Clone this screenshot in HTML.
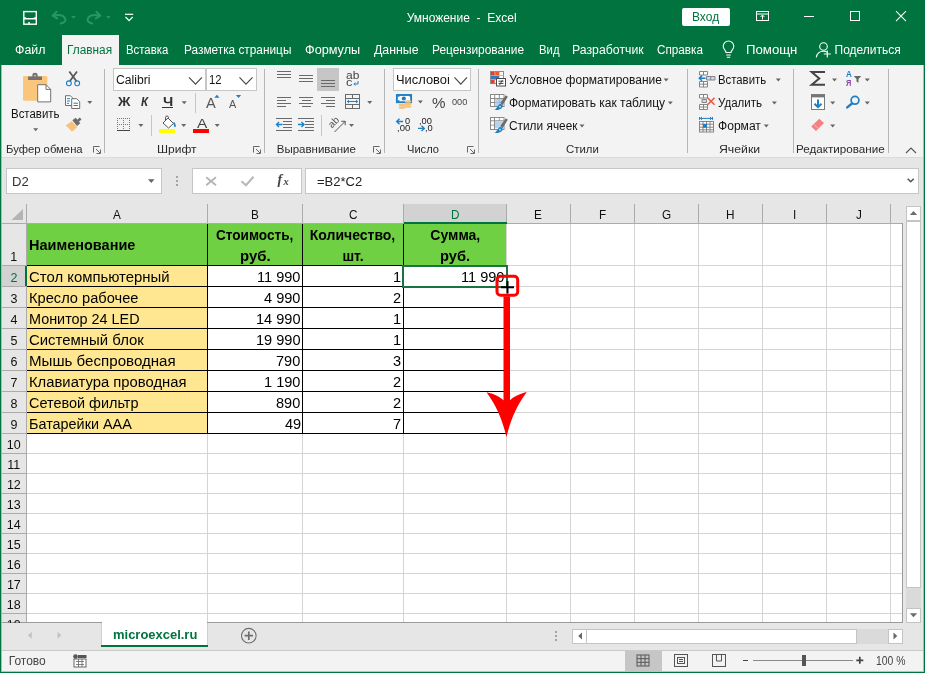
<!DOCTYPE html>
<html lang="ru"><head><meta charset="utf-8"><title>Умножение - Excel</title>
<style>
html,body{margin:0;padding:0}
body{width:925px;height:673px;overflow:hidden;background:#00733e;font-family:"Liberation Sans",sans-serif;}
#w{position:relative;width:925px;height:673px;overflow:hidden;will-change:transform}
#w>div,#w>span{position:absolute;display:block}
.t{white-space:pre;transform-origin:0 0}
#ic{position:absolute;left:0;top:0;pointer-events:none}
</style></head>
<body>
<div id="w">
<div style="left:0px;top:0px;width:925px;height:65px;background:#00733e;"></div>
<span class="t" style="left:406.68px;top:11.84px;font-size:12px;line-height:12px;color:#fff;">Умножение  -  Excel</span>
<div style="left:682px;top:8px;width:48px;height:18px;background:#fff;border-radius:2px;"></div>
<span class="t" style="left:692.01px;top:11.14px;font-size:12px;line-height:12px;color:#00733e;">Вход</span>
<div style="left:62px;top:35px;width:57px;height:30px;background:#f3f3f3;"></div>
<span class="t" style="left:14.99px;top:44.14px;font-size:12px;line-height:12px;color:#fff;transform:scaleX(1.0330);">Файл</span>
<span class="t" style="left:67.03px;top:44.14px;font-size:12px;line-height:12px;color:#00733e;transform:scaleX(0.9873);">Главная</span>
<span class="t" style="left:126.37px;top:44.14px;font-size:12px;line-height:12px;color:#fff;transform:scaleX(0.9469);">Вставка</span>
<span class="t" style="left:183.63px;top:44.14px;font-size:12px;line-height:12px;color:#fff;transform:scaleX(0.9865);">Разметка страницы</span>
<span class="t" style="left:305.37px;top:44.14px;font-size:12px;line-height:12px;color:#fff;transform:scaleX(1.0573);">Формулы</span>
<span class="t" style="left:374.41px;top:44.14px;font-size:12px;line-height:12px;color:#fff;transform:scaleX(1.0274);">Данные</span>
<span class="t" style="left:432.42px;top:44.14px;font-size:12px;line-height:12px;color:#fff;transform:scaleX(0.9930);">Рецензирование</span>
<span class="t" style="left:538.77px;top:44.14px;font-size:12px;line-height:12px;color:#fff;transform:scaleX(0.9455);">Вид</span>
<span class="t" style="left:571.99px;top:44.14px;font-size:12px;line-height:12px;color:#fff;transform:scaleX(1.0239);">Разработчик</span>
<span class="t" style="left:656.90px;top:44.14px;font-size:12px;line-height:12px;color:#fff;transform:scaleX(0.9771);">Справка</span>
<span class="t" style="left:746.33px;top:44.14px;font-size:12px;line-height:12px;color:#fff;transform:scaleX(1.0998);">Помощн</span>
<span class="t" style="left:834.52px;top:44.14px;font-size:12px;line-height:12px;color:#fff;">Поделиться</span>
<div style="left:1px;top:65px;width:922px;height:92px;background:#f3f3f3;"></div>
<div style="left:104px;top:69px;width:1px;height:84px;background:#b6b6b6;"></div>
<div style="left:264px;top:69px;width:1px;height:84px;background:#b6b6b6;"></div>
<div style="left:384px;top:69px;width:1px;height:84px;background:#b6b6b6;"></div>
<div style="left:478px;top:69px;width:1px;height:84px;background:#b6b6b6;"></div>
<div style="left:687px;top:69px;width:1px;height:84px;background:#b6b6b6;"></div>
<div style="left:793px;top:69px;width:1px;height:84px;background:#b6b6b6;"></div>
<div style="left:888px;top:69px;width:1px;height:84px;background:#b6b6b6;"></div>
<span class="t" style="left:5.57px;top:144.27px;font-size:11.5px;line-height:11.5px;color:#2b2b2b;transform:scaleX(0.9806);">Буфер обмена</span>
<span class="t" style="left:156.61px;top:144.27px;font-size:11.5px;line-height:11.5px;color:#2b2b2b;transform:scaleX(1.0465);">Шрифт</span>
<span class="t" style="left:276.75px;top:144.27px;font-size:11.5px;line-height:11.5px;color:#2b2b2b;">Выравнивание</span>
<span class="t" style="left:406.83px;top:144.27px;font-size:11.5px;line-height:11.5px;color:#2b2b2b;transform:scaleX(0.9655);">Число</span>
<span class="t" style="left:566.22px;top:144.27px;font-size:11.5px;line-height:11.5px;color:#2b2b2b;transform:scaleX(0.9890);">Стили</span>
<span class="t" style="left:719.43px;top:144.27px;font-size:11.5px;line-height:11.5px;color:#2b2b2b;transform:scaleX(1.0662);">Ячейки</span>
<span class="t" style="left:796.15px;top:144.27px;font-size:11.5px;line-height:11.5px;color:#2b2b2b;transform:scaleX(1.0123);">Редактирование</span>
<span class="t" style="left:10.66px;top:107.54px;font-size:12px;line-height:12px;color:#141414;transform:scaleX(0.9537);">Вставить</span>
<div style="left:113px;top:68px;width:93px;height:23px;background:#fff;border:1px solid #c6c6c6;box-sizing:border-box;"></div>
<div style="left:206px;top:68px;width:51px;height:23px;background:#fff;border:1px solid #c6c6c6;box-sizing:border-box;"></div>
<span class="t" style="left:115.98px;top:73.64px;font-size:12px;line-height:12px;color:#141414;transform:scaleX(1.0126);">Calibri</span>
<span class="t" style="left:209.04px;top:73.64px;font-size:12px;line-height:12px;color:#141414;transform:scaleX(0.9384);">12</span>
<span class="t" style="left:117.54px;top:95.92px;font-size:12.5px;line-height:12.5px;color:#333;font-weight:bold;transform:scaleX(1.0970);">Ж</span>
<span class="t" style="left:141.00px;top:95.92px;font-size:12.5px;line-height:12.5px;color:#333;font-weight:bold;font-style:italic;transform:scaleX(0.9171);">К</span>
<span class="t" style="left:163.11px;top:95.92px;font-size:12.5px;line-height:12.5px;color:#333;font-weight:bold;transform:scaleX(1.1693);">Ч</span>
<div style="left:162px;top:107px;width:11px;height:1px;background:#333;"></div>
<div style="left:195px;top:93px;width:1px;height:20px;background:#c6c6c6;"></div>
<span class="t" style="left:206.27px;top:96.15px;font-size:14px;line-height:14px;color:#555;transform:scaleX(1.0448);">A</span>
<span class="t" style="left:229.28px;top:99.11px;font-size:10.5px;line-height:10.5px;color:#555;transform:scaleX(1.0341);">A</span>
<div style="left:151px;top:115px;width:1px;height:21px;background:#c6c6c6;"></div>
<div style="left:159px;top:129px;width:16px;height:4px;background:#ffff00;"></div>
<span class="t" style="left:196.97px;top:117.47px;font-size:13.5px;line-height:13.5px;color:#444;transform:scaleX(1.1394);">A</span>
<div style="left:193px;top:129px;width:16px;height:4px;background:#ff0000;"></div>
<div style="left:277px;top:71px;width:14px;height:1px;background:#6a6a6a;"></div>
<div style="left:277px;top:74px;width:14px;height:1px;background:#6a6a6a;"></div>
<div style="left:277px;top:77px;width:14px;height:1px;background:#6a6a6a;"></div>
<div style="left:299px;top:75px;width:14px;height:1px;background:#6a6a6a;"></div>
<div style="left:299px;top:78px;width:14px;height:1px;background:#6a6a6a;"></div>
<div style="left:299px;top:81px;width:14px;height:1px;background:#6a6a6a;"></div>
<div style="left:317px;top:68px;width:22px;height:23px;background:#c6c6c6;"></div>
<div style="left:321px;top:80px;width:14px;height:1px;background:#6a6a6a;"></div>
<div style="left:321px;top:83px;width:14px;height:1px;background:#6a6a6a;"></div>
<div style="left:321px;top:86px;width:14px;height:1px;background:#6a6a6a;"></div>
<span class="t" style="left:346.19px;top:70.11px;font-size:10.5px;line-height:10.5px;color:#444;transform:scaleX(1.1398);">ab</span>
<span class="t" style="left:346.46px;top:77.11px;font-size:10.5px;line-height:10.5px;color:#444;transform:scaleX(1.2149);">c</span>
<div style="left:277px;top:97px;width:14px;height:1px;background:#6a6a6a;"></div>
<div style="left:277px;top:100px;width:9px;height:1px;background:#6a6a6a;"></div>
<div style="left:277px;top:103px;width:14px;height:1px;background:#6a6a6a;"></div>
<div style="left:277px;top:106px;width:9px;height:1px;background:#6a6a6a;"></div>
<div style="left:299.0px;top:97px;width:14px;height:1px;background:#6a6a6a;"></div>
<div style="left:301.5px;top:100px;width:9px;height:1px;background:#6a6a6a;"></div>
<div style="left:299.0px;top:103px;width:14px;height:1px;background:#6a6a6a;"></div>
<div style="left:301.5px;top:106px;width:9px;height:1px;background:#6a6a6a;"></div>
<div style="left:321px;top:97px;width:14px;height:1px;background:#6a6a6a;"></div>
<div style="left:326px;top:100px;width:9px;height:1px;background:#6a6a6a;"></div>
<div style="left:321px;top:103px;width:14px;height:1px;background:#6a6a6a;"></div>
<div style="left:326px;top:106px;width:9px;height:1px;background:#6a6a6a;"></div>
<div style="left:276px;top:118px;width:16px;height:1px;background:#6a6a6a;"></div>
<div style="left:276px;top:130px;width:16px;height:1px;background:#6a6a6a;"></div>
<div style="left:283px;top:121px;width:9px;height:1px;background:#6a6a6a;"></div>
<div style="left:283px;top:124px;width:9px;height:1px;background:#6a6a6a;"></div>
<div style="left:283px;top:127px;width:9px;height:1px;background:#6a6a6a;"></div>
<div style="left:298px;top:118px;width:16px;height:1px;background:#6a6a6a;"></div>
<div style="left:298px;top:130px;width:16px;height:1px;background:#6a6a6a;"></div>
<div style="left:305px;top:121px;width:9px;height:1px;background:#6a6a6a;"></div>
<div style="left:305px;top:124px;width:9px;height:1px;background:#6a6a6a;"></div>
<div style="left:305px;top:127px;width:9px;height:1px;background:#6a6a6a;"></div>
<div style="left:321px;top:115px;width:1px;height:21px;background:#c6c6c6;"></div>
<div style="left:393px;top:68px;width:78px;height:23px;background:#fff;border:1px solid #c6c6c6;box-sizing:border-box;"></div>
<span class="t" style="left:395.69px;top:73.64px;font-size:12px;line-height:12px;color:#141414;transform:scaleX(1.0753);clip-path:inset(0 4.8px 0 0);">Числовой</span>
<span class="t" style="left:431.86px;top:94.90px;font-size:15px;line-height:15px;color:#444;transform:scaleX(1.0107);">%</span>
<span class="t" style="left:452.44px;top:96.96px;font-size:9.5px;line-height:9.5px;color:#444;transform:scaleX(0.9665);">000</span>
<span class="t" style="left:405.24px;top:116.50px;font-size:8.5px;line-height:8.5px;color:#222;transform:scaleX(1.0830);">0</span>
<span class="t" style="left:397.15px;top:123.50px;font-size:8.5px;line-height:8.5px;color:#222;transform:scaleX(1.1195);">,00</span>
<span class="t" style="left:419.47px;top:116.50px;font-size:8.5px;line-height:8.5px;color:#222;transform:scaleX(1.0915);">,00</span>
<span class="t" style="left:424.56px;top:123.50px;font-size:8.5px;line-height:8.5px;color:#222;transform:scaleX(1.1014);">,0</span>
<span class="t" style="left:509.28px;top:74.04px;font-size:12px;line-height:12px;color:#141414;">Условное форматирование</span>
<span class="t" style="left:508.91px;top:97.04px;font-size:12px;line-height:12px;color:#141414;">Форматировать как таблицу</span>
<span class="t" style="left:509.00px;top:119.84px;font-size:12px;line-height:12px;color:#141414;transform:scaleX(0.9884);">Стили ячеек</span>
<span class="t" style="left:717.97px;top:73.84px;font-size:12px;line-height:12px;color:#141414;transform:scaleX(0.9456);">Вставить</span>
<span class="t" style="left:718.19px;top:96.64px;font-size:12px;line-height:12px;color:#141414;transform:scaleX(0.9623);">Удалить</span>
<span class="t" style="left:718.30px;top:119.84px;font-size:12px;line-height:12px;color:#141414;transform:scaleX(1.0065);">Формат</span>
<span class="t" style="left:846.10px;top:70.02px;font-size:8.6px;line-height:8.6px;color:#1e7fc4;font-weight:bold;transform:scaleX(0.9359);">А</span>
<span class="t" style="left:846.47px;top:79.42px;font-size:8.6px;line-height:8.6px;color:#8e44ad;font-weight:bold;transform:scaleX(0.8610);">Я</span>
<div style="left:1px;top:157px;width:922px;height:1px;background:#dadada;"></div>
<div style="left:1px;top:158px;width:922px;height:66px;background:#e6e6e6;"></div>
<div style="left:6px;top:168px;width:156px;height:26px;background:#fff;border:1px solid #c6c6c6;box-sizing:border-box;"></div>
<div style="left:192px;top:168px;width:110px;height:26px;background:#fff;border:1px solid #c6c6c6;box-sizing:border-box;"></div>
<div style="left:305px;top:168px;width:614px;height:26px;background:#fff;border:1px solid #c6c6c6;box-sizing:border-box;"></div>
<span class="t" style="left:12.43px;top:176.34px;font-size:12px;line-height:12px;color:#333;transform:scaleX(1.0908);">D2</span>
<div style="left:176px;top:175.5px;width:2px;height:2px;background:#a3a3a3;"></div>
<div style="left:176px;top:179.7px;width:2px;height:2px;background:#a3a3a3;"></div>
<div style="left:176px;top:183.8px;width:2px;height:2px;background:#a3a3a3;"></div>
<span class="t" style="left:277.5px;top:172.5px;font-size:14px;line-height:14px;color:#444;font-family:'Liberation Serif',serif;font-style:italic;font-weight:bold">f</span>
<span class="t" style="left:283.6px;top:177.1px;font-size:10.5px;line-height:10.5px;color:#444;font-family:'Liberation Serif',serif;font-style:italic;font-weight:bold">x</span>
<span class="t" style="left:316.96px;top:175.84px;font-size:12px;line-height:12px;color:#222;transform:scaleX(1.0838);">=B2*C2</span>
<div style="left:1px;top:224px;width:26px;height:398px;background:#e6e6e6;"></div>
<div style="left:27px;top:224px;width:876px;height:398px;background:#fff;"></div>
<div style="left:404px;top:204px;width:103px;height:19px;background:#d2d2d2;"></div>
<div style="left:1px;top:266px;width:25px;height:20px;background:#d2d2d2;"></div>
<div style="left:27px;top:224px;width:480px;height:42px;background:#70d044;"></div>
<div style="left:27px;top:266px;width:181px;height:168px;background:#ffe792;"></div>
<div style="left:506px;top:224px;width:1px;height:398px;background:#d4d4d4;"></div>
<div style="left:570px;top:224px;width:1px;height:398px;background:#d4d4d4;"></div>
<div style="left:634px;top:224px;width:1px;height:398px;background:#d4d4d4;"></div>
<div style="left:698px;top:224px;width:1px;height:398px;background:#d4d4d4;"></div>
<div style="left:762px;top:224px;width:1px;height:398px;background:#d4d4d4;"></div>
<div style="left:826px;top:224px;width:1px;height:398px;background:#d4d4d4;"></div>
<div style="left:890px;top:224px;width:1px;height:398px;background:#d4d4d4;"></div>
<div style="left:207px;top:434px;width:1px;height:188px;background:#d4d4d4;"></div>
<div style="left:302px;top:434px;width:1px;height:188px;background:#d4d4d4;"></div>
<div style="left:403px;top:434px;width:1px;height:188px;background:#d4d4d4;"></div>
<div style="left:507px;top:286px;width:396px;height:1px;background:#d4d4d4;"></div>
<div style="left:507px;top:307px;width:396px;height:1px;background:#d4d4d4;"></div>
<div style="left:507px;top:328px;width:396px;height:1px;background:#d4d4d4;"></div>
<div style="left:507px;top:349px;width:396px;height:1px;background:#d4d4d4;"></div>
<div style="left:507px;top:370px;width:396px;height:1px;background:#d4d4d4;"></div>
<div style="left:507px;top:391px;width:396px;height:1px;background:#d4d4d4;"></div>
<div style="left:507px;top:412px;width:396px;height:1px;background:#d4d4d4;"></div>
<div style="left:507px;top:433px;width:396px;height:1px;background:#d4d4d4;"></div>
<div style="left:507px;top:265px;width:396px;height:1px;background:#d4d4d4;"></div>
<div style="left:27px;top:453px;width:876px;height:1px;background:#d4d4d4;"></div>
<div style="left:27px;top:473px;width:876px;height:1px;background:#d4d4d4;"></div>
<div style="left:27px;top:493px;width:876px;height:1px;background:#d4d4d4;"></div>
<div style="left:27px;top:513px;width:876px;height:1px;background:#d4d4d4;"></div>
<div style="left:27px;top:533px;width:876px;height:1px;background:#d4d4d4;"></div>
<div style="left:27px;top:553px;width:876px;height:1px;background:#d4d4d4;"></div>
<div style="left:27px;top:573px;width:876px;height:1px;background:#d4d4d4;"></div>
<div style="left:27px;top:593px;width:876px;height:1px;background:#d4d4d4;"></div>
<div style="left:27px;top:613px;width:876px;height:1px;background:#d4d4d4;"></div>
<div style="left:27px;top:265px;width:480px;height:1px;background:#000;"></div>
<div style="left:27px;top:286px;width:480px;height:1px;background:#000;"></div>
<div style="left:27px;top:307px;width:480px;height:1px;background:#000;"></div>
<div style="left:27px;top:328px;width:480px;height:1px;background:#000;"></div>
<div style="left:27px;top:349px;width:480px;height:1px;background:#000;"></div>
<div style="left:27px;top:370px;width:480px;height:1px;background:#000;"></div>
<div style="left:27px;top:391px;width:480px;height:1px;background:#000;"></div>
<div style="left:27px;top:412px;width:480px;height:1px;background:#000;"></div>
<div style="left:27px;top:433px;width:480px;height:1px;background:#000;"></div>
<div style="left:207px;top:224px;width:1px;height:210px;background:#000;"></div>
<div style="left:302px;top:224px;width:1px;height:210px;background:#000;"></div>
<div style="left:403px;top:224px;width:1px;height:210px;background:#000;"></div>
<div style="left:26px;top:204px;width:1px;height:19px;background:#ababab;"></div>
<div style="left:207px;top:204px;width:1px;height:19px;background:#ababab;"></div>
<div style="left:302px;top:204px;width:1px;height:19px;background:#ababab;"></div>
<div style="left:403px;top:204px;width:1px;height:19px;background:#ababab;"></div>
<div style="left:506px;top:204px;width:1px;height:19px;background:#ababab;"></div>
<div style="left:570px;top:204px;width:1px;height:19px;background:#ababab;"></div>
<div style="left:634px;top:204px;width:1px;height:19px;background:#ababab;"></div>
<div style="left:698px;top:204px;width:1px;height:19px;background:#ababab;"></div>
<div style="left:762px;top:204px;width:1px;height:19px;background:#ababab;"></div>
<div style="left:826px;top:204px;width:1px;height:19px;background:#ababab;"></div>
<div style="left:890px;top:204px;width:1px;height:19px;background:#ababab;"></div>
<div style="left:26px;top:224px;width:1px;height:398px;background:#ababab;"></div>
<div style="left:1px;top:223px;width:901px;height:1px;background:#ababab;"></div>
<div style="left:1px;top:265px;width:25px;height:1px;background:#ababab;"></div>
<div style="left:1px;top:286px;width:25px;height:1px;background:#ababab;"></div>
<div style="left:1px;top:307px;width:25px;height:1px;background:#ababab;"></div>
<div style="left:1px;top:328px;width:25px;height:1px;background:#ababab;"></div>
<div style="left:1px;top:349px;width:25px;height:1px;background:#ababab;"></div>
<div style="left:1px;top:370px;width:25px;height:1px;background:#ababab;"></div>
<div style="left:1px;top:391px;width:25px;height:1px;background:#ababab;"></div>
<div style="left:1px;top:412px;width:25px;height:1px;background:#ababab;"></div>
<div style="left:1px;top:433px;width:25px;height:1px;background:#ababab;"></div>
<div style="left:1px;top:453px;width:25px;height:1px;background:#ababab;"></div>
<div style="left:1px;top:473px;width:25px;height:1px;background:#ababab;"></div>
<div style="left:1px;top:493px;width:25px;height:1px;background:#ababab;"></div>
<div style="left:1px;top:513px;width:25px;height:1px;background:#ababab;"></div>
<div style="left:1px;top:533px;width:25px;height:1px;background:#ababab;"></div>
<div style="left:1px;top:553px;width:25px;height:1px;background:#ababab;"></div>
<div style="left:1px;top:573px;width:25px;height:1px;background:#ababab;"></div>
<div style="left:1px;top:593px;width:25px;height:1px;background:#ababab;"></div>
<div style="left:1px;top:613px;width:25px;height:1px;background:#ababab;"></div>
<div style="left:902px;top:223px;width:1px;height:400px;background:#9b9b9b;"></div>
<div style="left:903px;top:224px;width:1px;height:399px;background:#e6e6e6;"></div>
<div style="left:1px;top:622px;width:902px;height:1px;background:#9b9b9b;"></div>
<span class="t" style="left:113.08px;top:209.42px;font-size:12.5px;line-height:12.5px;color:#111;transform:scaleX(0.9400);">A</span>
<span class="t" style="left:250.91px;top:209.42px;font-size:12.5px;line-height:12.5px;color:#111;transform:scaleX(0.9400);">B</span>
<span class="t" style="left:348.68px;top:209.42px;font-size:12.5px;line-height:12.5px;color:#111;transform:scaleX(0.9400);">C</span>
<span class="t" style="left:450.56px;top:209.42px;font-size:12.5px;line-height:12.5px;color:#00733e;transform:scaleX(0.9400);">D</span>
<span class="t" style="left:534.35px;top:209.42px;font-size:12.5px;line-height:12.5px;color:#111;transform:scaleX(0.9400);">E</span>
<span class="t" style="left:598.66px;top:209.42px;font-size:12.5px;line-height:12.5px;color:#111;transform:scaleX(0.9400);">F</span>
<span class="t" style="left:662.07px;top:209.42px;font-size:12.5px;line-height:12.5px;color:#111;transform:scaleX(0.9400);">G</span>
<span class="t" style="left:726.25px;top:209.42px;font-size:12.5px;line-height:12.5px;color:#111;transform:scaleX(0.9400);">H</span>
<span class="t" style="left:792.87px;top:209.42px;font-size:12.5px;line-height:12.5px;color:#111;transform:scaleX(0.9400);">I</span>
<span class="t" style="left:855.91px;top:209.42px;font-size:12.5px;line-height:12.5px;color:#111;transform:scaleX(0.9400);">J</span>
<span class="t" style="left:10.35px;top:251.42px;font-size:12.5px;line-height:12.5px;color:#111;">1</span>
<span class="t" style="left:10.52px;top:272.42px;font-size:12.5px;line-height:12.5px;color:#00733e;">2</span>
<span class="t" style="left:10.56px;top:293.42px;font-size:12.5px;line-height:12.5px;color:#111;">3</span>
<span class="t" style="left:10.56px;top:314.42px;font-size:12.5px;line-height:12.5px;color:#111;">4</span>
<span class="t" style="left:10.54px;top:335.42px;font-size:12.5px;line-height:12.5px;color:#111;">5</span>
<span class="t" style="left:10.48px;top:356.42px;font-size:12.5px;line-height:12.5px;color:#111;">6</span>
<span class="t" style="left:10.52px;top:377.42px;font-size:12.5px;line-height:12.5px;color:#111;">7</span>
<span class="t" style="left:10.52px;top:398.42px;font-size:12.5px;line-height:12.5px;color:#111;">8</span>
<span class="t" style="left:10.53px;top:419.42px;font-size:12.5px;line-height:12.5px;color:#111;">9</span>
<span class="t" style="left:6.82px;top:439.42px;font-size:12.5px;line-height:12.5px;color:#111;">10</span>
<span class="t" style="left:7.34px;top:459.42px;font-size:12.5px;line-height:12.5px;color:#111;">11</span>
<span class="t" style="left:6.89px;top:479.42px;font-size:12.5px;line-height:12.5px;color:#111;">12</span>
<span class="t" style="left:6.85px;top:499.42px;font-size:12.5px;line-height:12.5px;color:#111;">13</span>
<span class="t" style="left:6.76px;top:519.42px;font-size:12.5px;line-height:12.5px;color:#111;">14</span>
<span class="t" style="left:6.84px;top:539.42px;font-size:12.5px;line-height:12.5px;color:#111;">15</span>
<span class="t" style="left:6.85px;top:559.42px;font-size:12.5px;line-height:12.5px;color:#111;">16</span>
<span class="t" style="left:6.89px;top:579.42px;font-size:12.5px;line-height:12.5px;color:#111;">17</span>
<span class="t" style="left:6.84px;top:599.42px;font-size:12.5px;line-height:12.5px;color:#111;">18</span>
<span class="t" style="left:6.87px;top:619.42px;font-size:12.5px;line-height:12.5px;color:#222;clip-path:inset(0 0 8px 0);">19</span>
<div style="left:404px;top:222px;width:103px;height:2px;background:#00733e;"></div>
<div style="left:25px;top:266px;width:2px;height:20px;background:#00733e;"></div>
<span class="t" style="left:28.73px;top:238.05px;font-size:14px;line-height:14px;color:#000;font-weight:bold;transform:scaleX(1.0356);">Наименование</span>
<span class="t" style="left:216.24px;top:228.15px;font-size:14px;line-height:14px;color:#000;font-weight:bold;transform:scaleX(0.9718);">Стоимость,</span>
<span class="t" style="left:239.82px;top:249.15px;font-size:14px;line-height:14px;color:#000;font-weight:bold;transform:scaleX(1.0671);">руб.</span>
<span class="t" style="left:309.77px;top:228.15px;font-size:14px;line-height:14px;color:#000;font-weight:bold;">Количество,</span>
<span class="t" style="left:342.42px;top:249.15px;font-size:14px;line-height:14px;color:#000;font-weight:bold;">шт.</span>
<span class="t" style="left:430.33px;top:228.15px;font-size:14px;line-height:14px;color:#000;font-weight:bold;">Сумма,</span>
<span class="t" style="left:440.23px;top:249.15px;font-size:14px;line-height:14px;color:#000;font-weight:bold;transform:scaleX(1.0484);">руб.</span>
<span class="t" style="left:28.94px;top:270.15px;font-size:14px;line-height:14px;color:#000;transform:scaleX(1.0643);">Стол компьютерный</span>
<span class="t" style="left:257.12px;top:270.15px;font-size:14px;line-height:14px;color:#000;transform:scaleX(1.0400);">11 990</span>
<span class="t" style="left:393.41px;top:270.15px;font-size:14px;line-height:14px;color:#000;transform:scaleX(1.0400);">1</span>
<span class="t" style="left:29.00px;top:291.15px;font-size:14px;line-height:14px;color:#000;transform:scaleX(1.0458);">Кресло рабочее</span>
<span class="t" style="left:264.14px;top:291.15px;font-size:14px;line-height:14px;color:#000;transform:scaleX(1.0400);">4 990</span>
<span class="t" style="left:393.44px;top:291.15px;font-size:14px;line-height:14px;color:#000;transform:scaleX(1.0400);">2</span>
<span class="t" style="left:29.02px;top:312.15px;font-size:14px;line-height:14px;color:#000;transform:scaleX(1.0279);">Монитор 24 LED</span>
<span class="t" style="left:256.04px;top:312.15px;font-size:14px;line-height:14px;color:#000;transform:scaleX(1.0400);">14 990</span>
<span class="t" style="left:393.41px;top:312.15px;font-size:14px;line-height:14px;color:#000;transform:scaleX(1.0400);">1</span>
<span class="t" style="left:28.94px;top:333.15px;font-size:14px;line-height:14px;color:#000;transform:scaleX(1.0665);">Системный блок</span>
<span class="t" style="left:256.04px;top:333.15px;font-size:14px;line-height:14px;color:#000;transform:scaleX(1.0400);">19 990</span>
<span class="t" style="left:393.41px;top:333.15px;font-size:14px;line-height:14px;color:#000;transform:scaleX(1.0400);">1</span>
<span class="t" style="left:28.96px;top:354.15px;font-size:14px;line-height:14px;color:#000;transform:scaleX(1.0789);">Мышь беспроводная</span>
<span class="t" style="left:276.28px;top:354.15px;font-size:14px;line-height:14px;color:#000;transform:scaleX(1.0400);">790</span>
<span class="t" style="left:393.34px;top:354.15px;font-size:14px;line-height:14px;color:#000;transform:scaleX(1.0400);">3</span>
<span class="t" style="left:28.99px;top:375.15px;font-size:14px;line-height:14px;color:#000;transform:scaleX(1.0574);">Клавиатура проводная</span>
<span class="t" style="left:264.14px;top:375.15px;font-size:14px;line-height:14px;color:#000;transform:scaleX(1.0400);">1 190</span>
<span class="t" style="left:393.44px;top:375.15px;font-size:14px;line-height:14px;color:#000;transform:scaleX(1.0400);">2</span>
<span class="t" style="left:28.97px;top:396.15px;font-size:14px;line-height:14px;color:#000;transform:scaleX(1.0310);">Сетевой фильтр</span>
<span class="t" style="left:276.28px;top:396.15px;font-size:14px;line-height:14px;color:#000;transform:scaleX(1.0400);">890</span>
<span class="t" style="left:393.44px;top:396.15px;font-size:14px;line-height:14px;color:#000;transform:scaleX(1.0400);">2</span>
<span class="t" style="left:29.02px;top:417.15px;font-size:14px;line-height:14px;color:#000;transform:scaleX(1.0287);">Батарейки ААА</span>
<span class="t" style="left:284.50px;top:417.15px;font-size:14px;line-height:14px;color:#000;transform:scaleX(1.0400);">49</span>
<span class="t" style="left:393.44px;top:417.15px;font-size:14px;line-height:14px;color:#000;transform:scaleX(1.0400);">7</span>
<span class="t" style="left:460.92px;top:270.15px;font-size:14px;line-height:14px;color:#000;transform:scaleX(1.0400);">11 990</span>
<div style="left:402px;top:265px;width:106px;height:23px;border:2px solid #187443;box-sizing:border-box;"></div>
<div style="left:904px;top:202px;width:19px;height:421px;background:#e6e6e6;"></div>
<div style="left:906px;top:206px;width:15px;height:15px;background:#fff;border:1px solid #c4c4c4;box-sizing:border-box;"></div>
<div style="left:906px;top:221px;width:15px;height:367px;background:#fff;border:1px solid #c4c4c4;box-sizing:border-box;"></div>
<div style="left:906px;top:588px;width:15px;height:20px;background:#dadada;"></div>
<div style="left:906px;top:608px;width:15px;height:15px;background:#fff;border:1px solid #c4c4c4;box-sizing:border-box;"></div>
<div style="left:1px;top:623px;width:922px;height:27px;background:#e6e6e6;"></div>
<div style="left:102px;top:622px;width:105px;height:24px;background:#fff;"></div>
<div style="left:101px;top:645px;width:107px;height:2px;background:#00733e;"></div>
<div style="left:101px;top:623px;width:1px;height:22px;background:#cfcfcf;"></div>
<div style="left:207px;top:623px;width:1px;height:22px;background:#cfcfcf;"></div>
<span class="t" style="left:112.65px;top:629.42px;font-size:12.5px;line-height:12.5px;color:#00733e;font-weight:bold;transform:scaleX(1.0372);">microexcel.ru</span>
<div style="left:555px;top:630.8px;width:2px;height:2px;background:#a3a3a3;"></div>
<div style="left:555px;top:634.8px;width:2px;height:2px;background:#a3a3a3;"></div>
<div style="left:555px;top:638.8px;width:2px;height:2px;background:#a3a3a3;"></div>
<div style="left:572px;top:629px;width:15px;height:15px;background:#fff;border:1px solid #c4c4c4;box-sizing:border-box;"></div>
<div style="left:586px;top:629px;width:271px;height:15px;background:#fff;border:1px solid #c4c4c4;box-sizing:border-box;"></div>
<div style="left:857px;top:629px;width:31px;height:15px;background:#dadada;"></div>
<div style="left:888px;top:629px;width:15px;height:15px;background:#fff;border:1px solid #c4c4c4;box-sizing:border-box;"></div>
<div style="left:1px;top:650px;width:922px;height:1px;background:#c9c9c9;"></div>
<div style="left:1px;top:651px;width:922px;height:21px;background:#f3f3f3;"></div>
<span class="t" style="left:8.71px;top:655.14px;font-size:12px;line-height:12px;color:#444;">Готово</span>
<div style="left:625px;top:651px;width:37px;height:21px;background:#c6c6c6;"></div>
<div style="left:743px;top:659.5px;width:5px;height:1.6px;background:#444;"></div>
<div style="left:753px;top:660px;width:100px;height:1px;background:#8a8a8a;"></div>
<div style="left:801.5px;top:654.5px;width:4px;height:11.5px;background:#555;"></div>
<span class="t" style="left:876.11px;top:654.84px;font-size:12px;line-height:12px;color:#444;transform:scaleX(0.8659);">100 %</span>
<div style="left:0px;top:65px;width:1px;height:608px;background:#00733e;"></div>
<div style="left:1px;top:65px;width:1px;height:607px;background:#9cc3b0;"></div>
<div style="left:924px;top:65px;width:1px;height:608px;background:#00733e;"></div>
<div style="left:923px;top:65px;width:1px;height:607px;background:#a1c3b4;"></div>
<div style="left:2px;top:671px;width:921px;height:1px;background:#aaccbc;"></div>
<div style="left:0px;top:672px;width:925px;height:1px;background:#00733e;"></div>
<svg id="ic" width="925" height="673" viewBox="0 0 925 673">
<rect x="23.800" y="11.600" width="12.500" height="12.600" fill="none" stroke="#fff" stroke-width="1.400"/><path d="M24 17.300h1.500l1 .8h7l1-.8h1.700v2.300h-12.200z" fill="#fff"/><rect x="28.300" y="22" width="1.500" height="2.500" fill="#fff"/>
<g fill="none" stroke="#2a9567" stroke-width="2" stroke-linecap="round" stroke-linejoin="round"><path d="M53.500 15.600c4.500-1 9.300-.6 11.300 2.200 1.700 2.600-.3 4.900-4 5.700"/><path d="M56.600 11.700l-4 3.900 4.600 2.800"/></g>
<path d="M71.200 15.900h4.600l-2.300 2.800z" fill="#2a9567"/>
<g fill="none" stroke="#2a9567" stroke-width="2" stroke-linecap="round" stroke-linejoin="round"><path d="M99.500 15.600c-4.500-1-9.300-.6-11.300 2.200-1.700 2.600.3 4.900 4 5.700"/><path d="M96.400 11.700l4 3.900-4.600 2.800"/></g>
<path d="M106.100 15.900h4.600l-2.300 2.800z" fill="#2a9567"/>
<path d="M125 14.300h8.200" stroke="#fff" stroke-width="1.200"/><path d="M125.500 17l3.600 3.600 3.600-3.600" fill="none" stroke="#fff" stroke-width="1.200"/>
<g fill="none" stroke="#fff" stroke-width="1"><rect x="756.5" y="11.5" width="12" height="9"/><path d="M756.5 14h12"/><path d="M762.5 19.5v-4M760.5 17l2-2 2 2"/></g>
<path d="M804 16.5h10" stroke="#fff" stroke-width="1"/>
<rect x="850.5" y="11.5" width="9" height="9" fill="none" stroke="#fff" stroke-width="1"/>
<path d="M896 11.2l10 10M906 11.2l-10 10" stroke="#fff" stroke-width="1.1"/>
<g fill="none" stroke="#fff" stroke-width="1.1"><path d="M726 52.5c0-1.8-2.8-3.2-2.8-6.2a5.3 5.3 0 0 1 10.6 0c0 3-2.8 4.400-2.800 6.200z"/><path d="M726.200 55h4.600M726.800 57.300h3.400"/></g>
<g fill="none" stroke="#fff" stroke-width="1.1"><circle cx="823.5" cy="46.500" r="3.800"/><path d="M816.300 57.500c.6-4 3.400-6.200 7.200-6.200 1.600 0 2.800.3 3.800.9"/><path d="M827.300 50.500v7M823.800 54h7"/></g>
<g fill="none" stroke="#666" stroke-width="1"><path d="M93.5 152.5v-6h6"/><path d="M96 149l4 4M100.5 149.5v4h-4"/></g>
<g fill="none" stroke="#666" stroke-width="1"><path d="M253.5 152.5v-6h6"/><path d="M256 149l4 4M260.5 149.5v4h-4"/></g>
<g fill="none" stroke="#666" stroke-width="1"><path d="M373.5 152.5v-6h6"/><path d="M376 149l4 4M380.5 149.5v4h-4"/></g>
<g fill="none" stroke="#666" stroke-width="1"><path d="M467.5 152.5v-6h6"/><path d="M470 149l4 4M474.5 149.5v4h-4"/></g>
<path d="M906 153l5-5 5 5" fill="none" stroke="#555" stroke-width="1.1"/>
<rect x="23" y="76" width="24.300" height="24.800" rx="1.200" fill="#f9c67c"/>
<path d="M28.100 80v-3.400h4.300v-1.600a2.650 2.200 0 0 1 5.300 0v1.600h4.300v3.400z" fill="#727272"/><circle cx="35.050" cy="75.600" r=".9" fill="#e8c9a0"/>
<path d="M37.700 84.700h8.300l4.700 4.700v12.500h-13z" fill="#fff" stroke="#727272" stroke-width="1"/><path d="M46 84.700v4.700h4.700" fill="none" stroke="#727272"/>
<path d="M33.2 128.2h5l-2.5 3.0z" fill="#666"/>
<g fill="none"><path d="M69.300 71.500l7.200 9.700M77 71.500l-7.200 9.700" stroke="#595959" stroke-width="1.800"/><circle cx="68.900" cy="83.300" r="2.400" stroke="#1e7fc4" stroke-width="1.100"/><circle cx="77.200" cy="83.300" r="2.400" stroke="#1e7fc4" stroke-width="1.100"/></g>
<g fill="#fff" stroke="#6e6e6e" stroke-width="1"><path d="M65.500 95.700h4.800l2.200 2.200v7.600h-7z"/><path d="M71.700 98.700h5l3 3v6.800h-8z"/></g><path d="M73.500 103.200h4.500M73.500 105.500h4.500" stroke="#1e7fc4"/><path d="M67 98.700h3M67 101h3M67 103.300h2" stroke="#1e7fc4"/>
<path d="M87.3 101h5l-2.5 3.0z" fill="#666"/>
<path d="M65.700 125.300l6.200-4 5.300 6-5.200 4.500z" fill="#f9c27a"/><path d="M72.400 120.300l3.300-2.600 4.600 5.600-3.300 2.600z" fill="#6b6b6b"/><path d="M77.200 119.800l2.600-2.300 1.700 2-2.600 2.300z" fill="#6b6b6b"/>
<path d="M189 77.3l6.5 6.8l6.5 -6.8" fill="none" stroke="#444" stroke-width="1.1"/>
<path d="M239.5 77.3l6.5 6.8l6.5 -6.8" fill="none" stroke="#444" stroke-width="1.1"/>
<path d="M181.7 101.2h5l-2.5 3.0z" fill="#666"/>
<path d="M214.300 97.800l2.600-3 2.600 3z" fill="#1e7fc4"/>
<path d="M235.900 95h5.200l-2.600 3z" fill="#1e7fc4"/>
<g stroke="#777" stroke-width="1" stroke-dasharray="1 1"><path d="M117 118.500h13M117 124.500h13M117.500 118v12M123.500 118v12M129.500 118v12"/></g><path d="M117 130.500h13" stroke="#444" stroke-width="1"/>
<path d="M138.4 123.9h5l-2.5 3.0z" fill="#666"/>
<path d="M163 123l5-5 5.500 5.500-5 4.500z" fill="#fff" stroke="#555" stroke-width="1"/><path d="M165.500 120.500v-3a1.500 1.500 0 0 1 3 0v1.500" fill="none" stroke="#555"/><path d="M173.500 122.500c1.300 1.500 2 2.800 1.200 4.300" stroke="#1e7fc4" stroke-width="1.600" fill="none"/>
<path d="M181.2 123.9h5l-2.5 3.0z" fill="#666"/>
<path d="M214.7 123.9h5l-2.5 3.0z" fill="#666"/>
<path d="M358 81v3h-4M355.300 82.500l-1.500 1.500 1.500 1.500" fill="none" stroke="#1e7fc4" stroke-width="1"/>
<g fill="none" stroke="#6a6a6a" stroke-width="1"><rect x="345.500" y="94.500" width="14" height="14"/><path d="M345.500 98.500h14M345.500 104.500h14M352.500 94.500v4M352.500 104.500v4"/></g><path d="M347.300 101.500h10.400M349 99.900l-1.700 1.600 1.700 1.600M356 99.900l1.700 1.600-1.700 1.600" fill="none" stroke="#1e7fc4" stroke-width="1"/>
<path d="M367.2 101h5l-2.5 3.0z" fill="#666"/>
<path d="M276.5 124.5h6M279 122l-2.500 2.500 2.500 2.500" fill="none" stroke="#1e7fc4" stroke-width="1.400"/>
<path d="M298 124.5h6M301.5 122l2.500 2.500-2.500 2.500" fill="none" stroke="#1e7fc4" stroke-width="1.400"/>
<text x="0" y="0" font-family="Liberation Sans, sans-serif" font-size="10" fill="#555" transform="translate(332 128.500) rotate(-45)">ab</text><path d="M334.500 132l10.500-10.500M341.300 121.300h3.900v3.900" fill="none" stroke="#555" stroke-width="1"/>
<path d="M349 124h5l-2.5 3.0z" fill="#666"/>
<path d="M454.5 77.3l6.25 6.8l6.25 -6.8" fill="none" stroke="#444" stroke-width="1.1"/>
<rect x="396.900" y="95" width="14.200" height="7.200" fill="#fff" stroke="#1e7fc4" stroke-width="1.900"/><circle cx="403.800" cy="98.500" r="2.100" fill="#1e7fc4"/><path d="M398 96h1.500M409.500 96h1.500M398 101h1.500" stroke="#1e7fc4" stroke-width="1.500"/><g fill="#f6c27a"><ellipse cx="402" cy="107.500" rx="3.500" ry="1.300"/><ellipse cx="402" cy="105" rx="3.500" ry="1.300"/><ellipse cx="408" cy="104" rx="3.500" ry="1.300"/><ellipse cx="408" cy="101.500" rx="3.500" ry="1.300"/><ellipse cx="408" cy="106.500" rx="3.500" ry="1.300"/></g>
<path d="M417.9 100.6h5l-2.5 3.0z" fill="#666"/>
<path d="M396.500 121.500h6.500M399.500 118.800l-2.800 2.700 2.800 2.700" fill="none" stroke="#1e7fc4" stroke-width="1.400"/>
<path d="M418 128.400h6.500M421.500 125.700l2.800 2.700-2.800 2.700" fill="none" stroke="#1e7fc4" stroke-width="1.400"/>
<path d="M663.6 78.5h5l-2.5 3.0z" fill="#666"/>
<path d="M667.8 101.5h5l-2.5 3.0z" fill="#666"/>
<path d="M579.5 124.5h5l-2.5 3.0z" fill="#666"/>
<rect x="490.500" y="71.500" width="13" height="12" fill="#fff" stroke="#8a8a8a"/><path d="M494.800 71.500v12M499.200 71.500v12M490.500 75.500h13M490.500 79.500h13" stroke="#b0b0b0" stroke-width=".8"/><rect x="491" y="72" width="3.600" height="3.300" fill="#ee3d23"/><rect x="495.200" y="72" width="3.800" height="3.300" fill="#f0582a"/><rect x="491" y="76" width="8" height="3.300" fill="#2e7cc4"/><rect x="491" y="80" width="3.600" height="3.200" fill="#ee3d23"/><rect x="496.500" y="78.500" width="9" height="7.500" fill="#fff" stroke="#4a4a4a"/><path d="M498.500 81.200h5M498.500 83.400h5M502.600 79.900l-3 5" stroke="#333" stroke-width=".9"/>
<g fill="none" stroke="#8a8a8a"><rect x="490.500" y="94.500" width="13.500" height="12" fill="#fff"/><path d="M490.500 98.500h13.500M490.500 102.500h13.500M494.700 94.500v12M499.300 94.500v12"/></g><rect x="495.200" y="99" width="8.300" height="7" fill="#b9d3ec"/><path d="M499.300 99v7M495.200 102.500h8.300" stroke="#8fb3d6" stroke-width=".7"/>
<path d="M505.900 95.2l-5.600 7.800 2.300 1.900 5.200-8.100z" fill="#6b6b6b"/><path d="M493.800 109.6c2.600-.2 3.200-2.400 4.600-4.400 1-1.400 2.600-1.600 3.600-.7s.8 2.700-.4 3.700c-2.100 1.800-5.100 2.100-7.800 1.400z" fill="#1e7fc4"/><circle cx="500" cy="106.7" r=".9" fill="#cfe3f5"/>
<g fill="none" stroke="#8a8a8a"><rect x="490.500" y="117.500" width="13.500" height="12" fill="#fff"/><path d="M490.500 120.800h13.500M494.500 117.500v12"/><path d="M490.500 125.200h4M499.300 117.500v3.300" stroke-width=".8"/></g><rect x="495" y="121.300" width="8.500" height="7" fill="#b9d3ec"/>
<path d="M505.900 118.2l-5.600 7.800 2.300 1.900 5.200-8.100z" fill="#6b6b6b"/><path d="M493.800 132.6c2.600-.2 3.200-2.400 4.600-4.400 1-1.400 2.600-1.600 3.600-.7s.8 2.700-.4 3.700c-2.100 1.800-5.100 2.100-7.800 1.400z" fill="#1e7fc4"/><circle cx="500" cy="129.7" r=".9" fill="#cfe3f5"/>
<path d="M775.8 78.5h5l-2.5 3.0z" fill="#666"/>
<path d="M771.9 101.5h5l-2.5 3.0z" fill="#666"/>
<path d="M763.8 124.5h5l-2.5 3.0z" fill="#666"/>
<g fill="#fff" stroke="#858585" stroke-width="1"><path d="M699.500 71.500h8v3.500h-8zM703.500 71.500v3.500"/><path d="M699.500 81.500h8v5.500h-8zM703.500 81.500v5.500M699.500 84.200h8"/><path d="M706.500 76.500h8.500v3.500h-8.500z" fill="#c9dcef"/><path d="M710.700 76.500v3.500"/></g><path d="M699.300 78.200h6.200M702 75.600l-2.700 2.600 2.700 2.600" fill="none" stroke="#1e7fc4" stroke-width="1.500"/>
<g fill="#fff" stroke="#858585" stroke-width="1"><path d="M699.500 94.500h8v3.500h-8zM703.500 94.500v3.500"/><path d="M699.500 104.500h8v5h-8zM703.500 104.500v5M699.500 107h8"/><path d="M702 99.500h4.500v3h-4.500z" fill="#c9dcef"/></g><path d="M707.500 97.800l7 7M714.500 97.800l-7 7" stroke="#f0533c" stroke-width="1.500"/>
<g fill="none" stroke="#858585"><rect x="699.500" y="121.500" width="14" height="10.500" fill="#fff"/><path d="M699.500 124.200h14M699.500 127.200h14M699.500 129.800h14M703 121.500v10.500M706.500 121.500v10.500M710 121.500v10.500"/></g><rect x="703" y="124" width="4" height="3.700" fill="#1e7fc4"/><path d="M700 118.400h12M699.500 117v2.800M712.500 117v2.800M702 117l-1.500 1.400 1.500 1.400M710 117l1.500 1.400-1.500 1.400" fill="none" stroke="#1e7fc4" stroke-width="1"/>
<path d="M825 72h-13.300l7.600 6.400-7.600 6.400h13.300" fill="none" stroke="#444" stroke-width="2" stroke-linejoin="miter"/>
<path d="M832 78.5h5l-2.5 3.0z" fill="#666"/>
<path d="M853.800 76h7.400l-2.700 3v3.800l-2-1.300v-2.500z" fill="#666"/>
<path d="M864.8 78.5h5l-2.5 3.0z" fill="#666"/>
<rect x="811.500" y="94.700" width="13" height="14.800" fill="#fff" stroke="#7a7a7a"/><rect x="811" y="94.200" width="14" height="3.200" fill="#777"/><path d="M818 99.500v7.500M814.500 103.800l3.500 3.400 3.500-3.400" fill="none" stroke="#1e7fc4" stroke-width="2"/>
<path d="M830.2 101.5h5l-2.5 3.0z" fill="#666"/>
<circle cx="855" cy="100.300" r="3.900" fill="none" stroke="#1e7fc4" stroke-width="1.700"/><path d="M852 103.500l-4.800 3.900" stroke="#1e7fc4" stroke-width="2.400" stroke-linecap="round"/>
<path d="M864.8 101.5h5l-2.5 3.0z" fill="#666"/>
<path d="M811.200 126.500l8-7.800 4.800 4.300-8 8z" fill="#f77f84"/><path d="M813.800 124.200l4.600 4.400" stroke="#fbb4b6" stroke-width="1"/>
<path d="M830.2 124.5h5l-2.5 3.0z" fill="#666"/>
<path d="M148 179.2h6.5l-3.25 3.75z" fill="#666"/>
<path d="M206.200 177.300l9.800 8M216 177.300l-9.800 8" stroke="#b4b4b4" stroke-width="1.800"/>
<path d="M241.400 181.300l4.600 4 7.500-8.500" fill="none" stroke="#b9b9b9" stroke-width="2.100"/>
<path d="M907.700 178.700l3 3 3-3" fill="none" stroke="#555" stroke-width="1.600"/>
<path d="M23 209v11h-11.500z" fill="#b4b4b4"/>
<path d="M909.800 215h7.400l-3.700-4z" fill="#6e6e6e"/>
<path d="M909.800 613.300h7.400l-3.700 4z" fill="#6e6e6e"/>
<path d="M31.800 631.800v7l-4-3.500z" fill="#c3c3c3"/><path d="M57.500 631.800v7l4-3.500z" fill="#c3c3c3"/>
<circle cx="248.800" cy="635.700" r="7.300" fill="none" stroke="#6e6e6e" stroke-width="1.100"/><path d="M244.600 635.700h8.400M248.800 631.500v8.400" stroke="#6e6e6e" stroke-width="1.700"/>
<path d="M582 632.500v7l-3.800-3.500z" fill="#666"/>
<path d="M893.500 632.500v7l3.800-3.500z" fill="#666"/>
<rect x="74" y="659" width="12" height="8" fill="#fff" stroke="#666" stroke-width="1"/><path d="M76 661.500h8M76 664.500h8M78.500 659v8M82 659v8" stroke="#666" stroke-width=".8"/><rect x="78" y="655" width="8.500" height="3" fill="#555"/><circle cx="75.500" cy="656.500" r="2.300" fill="#555"/>
<g fill="none" stroke="#555" stroke-width="1"><rect x="637" y="655" width="12" height="11"/><path d="M637 658.700h12M637 662.300h12M641 655v11M645 655v11"/></g>
<g fill="none" stroke="#555" stroke-width="1"><rect x="674.500" y="654.500" width="13" height="12"/><rect x="677.500" y="657.500" width="7" height="6"/><path d="M679 659.500h4M679 661.500h4"/></g>
<g fill="none" stroke="#555" stroke-width="1"><rect x="712.500" y="654.500" width="13" height="12"/><path d="M716.500 654.500v6.500h5v-6.500"/></g>
<path d="M856.300 660.300h7M859.800 656.800v7" stroke="#444" stroke-width="1.700"/>
<rect x="497" y="276.300" width="20.700" height="19" rx="3.500" fill="none" stroke="#ff0000" stroke-width="3"/>
<path d="M501 287.200h13M507.500 281v12.500" stroke="#000" stroke-width="2"/>
<rect x="503.500" y="296.500" width="6.500" height="105" fill="#ff0000"/>
<path d="M486.500 392.200C495 394 500 397 503.500 400.200L510 400.200C513.500 397 518.500 394 526.800 392C517 405 510.500 420 506.500 437C502.500 420 496 405 486.500 392.200z" fill="#ff0000"/>
</svg>
</div>
</body></html>
